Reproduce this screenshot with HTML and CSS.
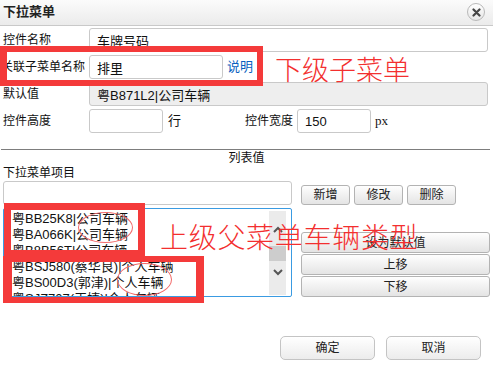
FILE: index.html
```html
<!DOCTYPE html>
<html lang="zh-CN">
<head>
<meta charset="utf-8">
<title>下拉菜单</title>
<link rel="stylesheet" href="styles.css">
</head>
<body>
<div class="dlg">
  <div class="titlebar">
    <span class="title">下拉菜单</span>
    <span class="close"><svg width="9" height="9" viewBox="0 0 9 9"><path d="M1.5 1.5 L7.5 7.5 M7.5 1.5 L1.5 7.5" stroke="#444" stroke-width="2.2" stroke-linecap="round"/></svg></span>
  </div>
  <div class="form">
    <div class="row">
      <span class="lbl">控件名称</span>
      <input class="inp inp-wide" type="text" value="车牌号码">
    </div>
    <div class="row">
      <span class="lbl lbl-long">关联子菜单名称</span>
      <input class="inp inp-mid" type="text" value="排里">
      <a class="link" href="#">说明</a>
    </div>
    <div class="row">
      <span class="lbl">默认值</span>
      <input class="inp inp-wide inp-disabled" type="text" value="粤B871L2|公司车辆" disabled>
    </div>
    <div class="row">
      <span class="lbl">控件高度</span>
      <input class="inp inp-short" type="text" value="">
      <span class="unit">行</span>
      <span class="lbl2">控件宽度</span>
      <input class="inp inp-short" type="text" value="150">
      <span class="px">px</span>
    </div>
  </div>
  <div class="sep"></div>
  <div class="sec-title">列表值</div>
  <div class="items-label">下拉菜单项目</div>
  <div class="list-grid">
    <input class="inp inp-item" type="text" value="">
    <div class="top-btns">
      <button class="btn btn-sm">新增</button>
      <button class="btn btn-sm">修改</button>
      <button class="btn btn-sm">删除</button>
    </div>
    <div class="listbox">
      <div class="items">
        <div class="item">粤BB25K8|公司车辆</div>
        <div class="item">粤BA066K|公司车辆</div>
        <div class="item">粤B8B56T|公司车辆</div>
        <div class="item">粤BSJ580(蔡华良)|个人车辆</div>
        <div class="item">粤BS00D3(郭津)|个人车辆</div>
        <div class="item">粤SJZ707(王婕)|个人车辆</div>
      </div>
      <div class="scrollbar">
        <div class="sb-up"><svg width="10" height="7" viewBox="0 0 10 7"><polyline points="1,6 5,2 9,6" fill="none" stroke="#555" stroke-width="2"/></svg></div>
        <div class="sb-thumb"></div>
        <div class="sb-down"><svg width="10" height="7" viewBox="0 0 10 7"><polyline points="1,1 5,5 9,1" fill="none" stroke="#555" stroke-width="2"/></svg></div>
      </div>
    </div>
    <div class="side-btns">
      <button class="btn btn-wide">设为默认值</button>
      <button class="btn btn-wide">上移</button>
      <button class="btn btn-wide">下移</button>
    </div>
  </div>
  <div class="footer">
    <button class="btn btn-foot">确定</button>
    <button class="btn btn-foot">取消</button>
  </div>

  <div class="mark mark-a"></div>
  <div class="mark mark-b"></div>
  <div class="mark mark-c"></div>
  <div class="ring ring-1"></div>
  <div class="ring ring-2"></div>
  <div class="note note-1">下级子菜单</div>
  <div class="note note-2">上级父菜单车辆类型</div>
</div>
</body>
</html>
```

FILE: styles.css
```css
* { box-sizing: border-box; }

html, body {
  margin: 0;
  padding: 0;
  background: #fff;
}

body {
  font-family: "Liberation Sans", "Noto Sans CJK SC", sans-serif;
  font-size: 12px;
  color: #111;
}

.dlg {
  position: relative;
  width: 493px;
  height: 379px;
  overflow: hidden;
}

.titlebar {
  height: 26px;
  border-bottom: 1px solid #c9c9c9;
  background: linear-gradient(#fbfbfb, #ebebeb);
  display: flex;
  align-items: center;
  justify-content: space-between;
  padding: 0 8px 1px 3px;
}

.title {
  font-weight: bold;
  font-size: 13px;
  color: #222;
  line-height: 16px;
}

.close {
  width: 18px;
  height: 18px;
  border-radius: 50%;
  border: 1px solid #b9b9b9;
  background: linear-gradient(#ffffff, #e6e6e6);
  display: flex;
  align-items: center;
  justify-content: center;
}

.form {
  padding: 2px 0 0 3px;
}

.row {
  display: flex;
  align-items: center;
  height: 24px;
  margin-bottom: 3px;
}

.lbl {
  width: 86px;
  flex: none;
  white-space: nowrap;
  line-height: 16px;
}

.lbl-long {
  margin-left: -2px;
  width: 88px;
}

.inp {
  height: 24px;
  border: 1px solid #c9c9c9;
  border-radius: 3px;
  background: #fff;
  font-family: "Liberation Sans", "Noto Sans CJK SC", sans-serif;
  font-size: 13px;
  color: #111;
  padding: 0 7px;
  margin: 0;
  outline: none;
}

.inp-wide { width: 399px; }
.inp-mid { width: 134px; }
.inp-short { width: 74px; }
.inp-disabled {
  background: #eeeeee;
  color: #111;
  -webkit-text-fill-color: #111;
  opacity: 1;
}

.link {
  margin-left: 4px;
  color: #0a5fc0;
  text-decoration: none;
  font-size: 13px;
  line-height: 16px;
}

.unit {
  margin-left: 5px;
  font-size: 13px;
  line-height: 16px;
}

.lbl2 {
  margin-left: 64px;
  margin-right: 4px;
  line-height: 16px;
}

.px {
  margin-left: 4px;
  font-family: "Liberation Serif", serif;
  font-size: 13px;
  line-height: 16px;
}

.sep {
  margin: 16px 3px 0 1px;
  height: 1px;
  background: #7d7d7d;
}

.sec-title {
  text-align: center;
  line-height: 15px;
  height: 15px;
  margin-top: 1px;
}

.items-label {
  line-height: 15px;
  height: 15px;
  padding-left: 3px;
}

.list-grid {
  display: grid;
  grid-template-columns: 289px 189px;
  column-gap: 9px;
  row-gap: 3px;
  padding-left: 3px;
}

.inp-item {
  width: 289px;
}

.top-btns {
  display: flex;
  gap: 4px;
  align-items: flex-end;
}

.btn {
  font-family: "Liberation Sans", "Noto Sans CJK SC", sans-serif;
  font-size: 12px;
  color: #222;
  border: 1px solid #b3b3b3;
  border-radius: 3px;
  background: linear-gradient(#fefefe, #e4e4e4);
  padding: 0;
  margin: 0;
  line-height: 16px;
}

.btn-sm {
  width: 49px;
  height: 20px;
}

.listbox {
  height: 89px;
  border: 1px solid #3a9be2;
  border-radius: 2px;
  display: flex;
  padding: 2px 5px 0 8px;
  overflow: hidden;
}

.items {
  flex: 1;
  overflow: hidden;
  font-size: 13px;
}

.item {
  height: 16px;
  line-height: 16px;
  white-space: nowrap;
}

.scrollbar {
  width: 17px;
  margin: 0 0 1px;
  background: #ebebeb;
  display: flex;
  flex-direction: column;
}

.sb-up {
  height: 35px;
  display: flex;
  align-items: center;
  justify-content: center;
  padding-top: 2px;
}

.sb-thumb {
  height: 15px;
  background: #cdcdcd;
}

.sb-down {
  height: 22px;
  display: flex;
  align-items: center;
  justify-content: center;
}

.side-btns {
  align-self: end;
  display: flex;
  flex-direction: column;
  gap: 1px;
}

.btn-wide {
  width: 189px;
  height: 21px;
}

.footer {
  display: flex;
  justify-content: flex-end;
  gap: 11px;
  padding-right: 12px;
  margin-top: 39px;
}

.btn-foot {
  width: 95px;
  height: 24px;
  border-radius: 5px;
  border-color: #c4c4c4;
  background: linear-gradient(#ffffff, #ececec);
}

/* annotation overlays */
.mark {
  position: absolute;
  border: 7px solid #f43a3a;
}

.mark-a {
  left: 0;
  top: 46px;
  width: 263px;
  height: 40px;
  border-width: 6px 6px 6px 7px;
}

.mark-b {
  left: 4px;
  top: 203px;
  width: 141px;
  height: 54px;
}

.mark-c {
  left: 3px;
  top: 256px;
  width: 201px;
  height: 47px;
  border-width: 6px 8px 6px 9px;
}

.ring {
  position: absolute;
  border: 1px solid #f26a6a;
  border-radius: 50%;
}

.ring-1 {
  left: 78px;
  top: 212px;
  width: 55px;
  height: 31px;
}

.ring-2 {
  left: 117px;
  top: 263px;
  width: 55px;
  height: 33px;
}

.note {
  position: absolute;
  color: #f32f2f;
  font-family: "Noto Sans CJK SC", sans-serif;
  font-weight: 300;
  white-space: nowrap;
}

.note-1 {
  left: 275px;
  top: 52px;
  font-size: 27px;
  line-height: 34px;
}

.note-2 {
  left: 160px;
  top: 219px;
  font-size: 28px;
  letter-spacing: 0.7px;
  line-height: 34px;
}
```
